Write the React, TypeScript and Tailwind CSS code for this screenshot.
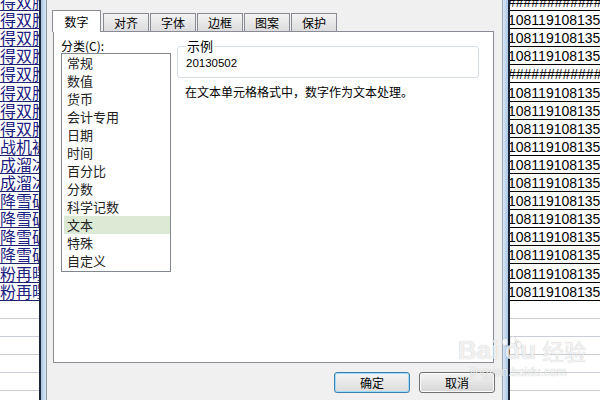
const cjk = "font-['Noto_Sans_CJK_SC','Noto_Sans_CJK_JP',sans-serif]";

const leftRows = [
  '得双胞', '得双胞', '得双胞', '得双胞', '得双胞', '得双胞', '得双胞', '得双胞',
  '战机被', '成溜冰', '成溜冰', '降雪破', '降雪破', '降雪破', '降雪破', '粉再曝', '粉再曝',
];

const rightRows = leftRows.map((_, i) => (i === 0 || i === 4 ? '############' : '108119108135'));

const categories = ['常规', '数值', '货币', '会计专用', '日期', '时间', '百分比', '分数', '科学记数', '文本', '特殊', '自定义'];

const tabs = ['对齐', '字体', '边框', '图案', '保护'];

const EmptyRows = () => (
  <>
    {[0, 1, 2, 3, 4, 5].map((i) => (
      <div key={i} className="h-[18px] border-b border-[#c9ced6]" />
    ))}
  </>
);

export default function App() {
  return (
    <div className="relative flex h-[400px] w-[600px] overflow-hidden bg-white">
      {/* sheet, left column */}
      <div className="w-[39px] overflow-hidden">
        <div className="-mt-[7px]">
          {leftRows.map((t, i) => (
            <div
              key={i}
              className={`flex h-[18.1px] items-end whitespace-nowrap border-b border-[#1e2270] text-[16px] leading-[17px] text-[#1d2180] ${cjk}`}
            >
              {t}
            </div>
          ))}
          <EmptyRows />
        </div>
      </div>

      {/* window frame left */}
      <div className="w-[2px] bg-[#1c2438]" />
      <div className="w-[5px] bg-gradient-to-r from-[#a9c6e4] to-[#dbe8f5]" />
      <div className="w-[1px] bg-[#8b97a6]" />

      {/* dialog */}
      <div className={`flex w-[455px] flex-col bg-[#f0f0f0] pl-[5px] pr-[8px] text-[12px] text-black ${cjk}`}>
        {/* tabs */}
        <div className="flex h-[31px] items-end">
          <div className="relative top-[1px] z-10 flex h-[22px] w-[49px] items-center justify-center border border-b-0 border-[#898c95] bg-white">
            数字
          </div>
          {tabs.map((t, i) => (
            <div
              key={t}
              className={`flex h-[18px] w-[46px] items-center justify-center border border-b-0 border-[#898c95] bg-gradient-to-b from-[#f3f3f3] to-[#dcdcdc] ${i === 0 ? 'ml-[2px]' : 'ml-[1px]'}`}
            >
              {t}
            </div>
          ))}
        </div>

        {/* panel */}
        <div className="ml-[1px] flex h-[332px] border border-[#898c95] bg-white px-[7px]">
          <div className="w-[110px] pt-[6px]">
            <div className="h-[15px] leading-[15px]">分类(C):</div>
            <div className="h-[219px] border border-[#828790] bg-white">
              {categories.map((c) => (
                <div
                  key={c}
                  className={`ml-[2px] flex h-[18px] items-center pl-[3px] text-[13px] text-[#222] ${c === '文本' ? 'bg-[#dce9d5]' : ''}`}
                >
                  {c}
                </div>
              ))}
            </div>
          </div>

          <div className="ml-[6px] flex-1 pr-[7px]">
            <div className="relative mt-[14px] h-[32px] rounded-[3px] border border-[#d5dfe5]">
              <div className="absolute -top-[9px] left-[8px] bg-white px-[1px] text-[13px] leading-[16px]">示例</div>
              <div className="pl-[8px] pt-[9px] font-['Liberation_Sans',sans-serif] text-[11.5px] leading-[14px]">
                20130502
              </div>
            </div>
            <div className="mt-[6px] pl-[8px] leading-[15px]">在文本单元格格式中，数字作为文本处理。</div>
          </div>
        </div>

        {/* buttons */}
        <div className="-mr-[1px] mt-[9px] flex justify-end gap-[9px]">
          <button className="h-[21px] w-[76px] rounded-[3px] border border-[#3c7fb1] bg-gradient-to-b from-[#f4f4f4] to-[#dcdcdc] text-[12px] shadow-[inset_0_0_0_1px_#9fdaf7]">
            确定
          </button>
          <button className="h-[21px] w-[76px] rounded-[3px] border border-[#707070] bg-gradient-to-b from-[#f4f4f4] to-[#d6d6d6] text-[12px] shadow-[inset_0_0_0_1px_#fbfbfb]">
            取消
          </button>
        </div>
      </div>

      {/* window frame right */}
      <div className="w-[1px] bg-[#9aa3ae]" />
      <div className="w-[5px] bg-gradient-to-r from-[#dbe8f5] to-[#a9c6e4]" />
      <div className="w-[2px] bg-[#1c2438]" />

      {/* sheet, right column */}
      <div className="flex-1 overflow-hidden">
        <div className="-mt-[7px]">
          {rightRows.map((t, i) => (
            <div
              key={i}
              className="flex h-[18.1px] items-end whitespace-nowrap border-b border-black pl-[1px] font-['Liberation_Sans',sans-serif] text-[14px] leading-[16px] text-black"
            >
              <span className="-ml-[3px]">{t}</span>
            </div>
          ))}
          <EmptyRows />
        </div>
      </div>

      {/* baidu watermark */}
      <div className="pointer-events-none absolute left-[458px] top-[336px] text-white/80 [text-shadow:0_0_1px_rgba(0,0,0,0.3)]">
        <div className="flex items-end gap-[2px] font-['Liberation_Sans',sans-serif] text-[26px] font-bold leading-[28px]">
          <span>Bai</span>
          <svg width="22" height="28" viewBox="0 0 22 28" className="opacity-70">
            <g fill="white" stroke="rgba(0,0,0,0.2)" strokeWidth="0.8">
              <ellipse cx="5" cy="6" rx="3" ry="4" />
              <ellipse cx="13" cy="4" rx="3" ry="4" />
              <ellipse cx="19" cy="9" rx="2.5" ry="3.5" />
            </g>
          </svg>
          <span className="-ml-[20px]">du</span>
          <span className={`ml-[4px] text-[22px] font-normal ${cjk}`}>经验</span>
        </div>
        <div className="pl-[12px] font-['Liberation_Sans',sans-serif] text-[12px] leading-[16px]">jingyan.baidu.com</div>
      </div>
    </div>
  );
}
